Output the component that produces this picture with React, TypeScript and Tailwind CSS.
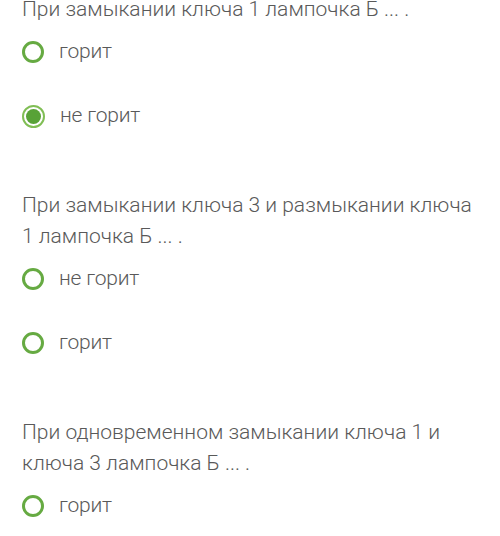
import React from 'react';

interface Question {
    text: string;
    options: string[];
    selected?: number;
}

const questions: Question[] = [
    { text: 'При замыкании ключа 1 лампочка Б ... .', options: ['горит', 'не горит'], selected: 1 },
    { text: 'При замыкании ключа 3 и размыкании ключа 1 лампочка Б ... .', options: ['не горит', 'горит'] },
    { text: 'При одновременном замыкании ключа 1 и ключа 3 лампочка Б ... .', options: ['горит'] },
];

const Radio: React.FC<{ checked: boolean }> = ({ checked }) =>
    checked ? (
        <span className="w-[23px] h-[23px] rounded-full border-[2px] border-[#80be55] bg-white flex items-center justify-center shrink-0">
            <span className="w-[15px] h-[15px] rounded-full bg-[#58a237]" />
        </span>
    ) : (
        <span className="w-[22px] h-[22px] rounded-full border-[3px] border-[#66aa42] bg-white shrink-0" />
    );

export default function App() {
    return (
        <div className="w-[500px] h-[536px] overflow-hidden bg-white font-light" style={{ fontFamily: 'Roboto, "Noto Sans", sans-serif' }}>
            <div className="-mt-[6px] px-[22px] flex flex-col gap-[54px]">
                {questions.map((q, i) => (
                    <div key={i} className="flex flex-col">
                        <p className="text-[21px] leading-[31px] text-[#595959]">{q.text}</p>
                        <div className="mt-[7px] flex flex-col gap-[24px]">
                            {q.options.map((o, j) => (
                                <label key={j} className="h-[40px] flex items-center gap-[15px]">
                                    <Radio checked={q.selected === j} />
                                    <span className="text-[21px] tracking-[-0.2px] text-[#595959]">{o}</span>
                                </label>
                            ))}
                        </div>
                    </div>
                ))}
            </div>
        </div>
    );
}
